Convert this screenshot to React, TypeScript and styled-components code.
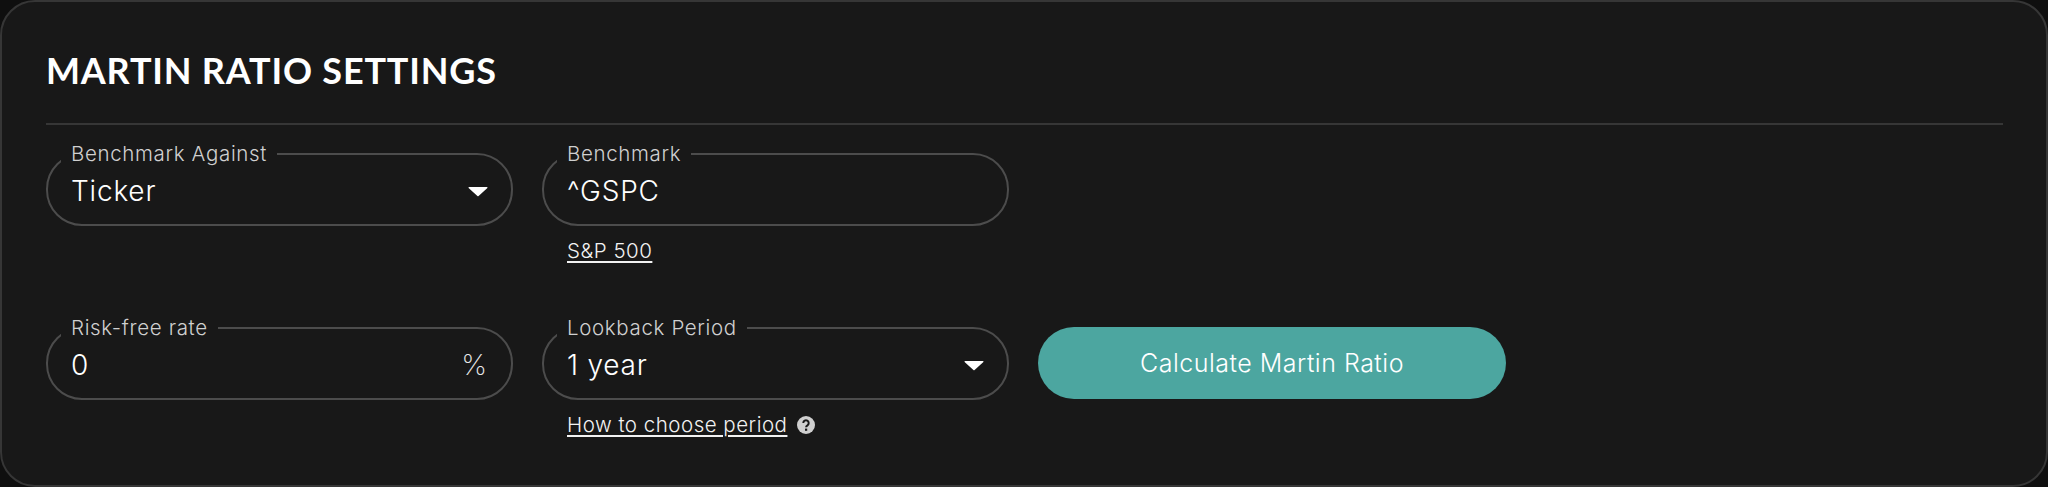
import React from "react";
import styled, { createGlobalStyle } from "styled-components";

const Global = createGlobalStyle`
  html, body { margin: 0; padding: 0; background: #0f0f0f; }
  body { font-family: "Inter", "Noto Sans", sans-serif; }
`;

const Card = styled.section`
  box-sizing: border-box;
  width: 2048px;
  height: 487px;
  padding: 0 43px 0 44px;
  background: #181818;
  border: 2px solid #363636;
  border-radius: 35px;
  overflow: hidden;
`;

const Title = styled.h2`
  margin: 0;
  padding: 47px 0 32px;
  height: 42px;
  box-sizing: content-box;
  font-family: "Lato", "Noto Sans", sans-serif;
  font-size: 36px;
  line-height: 42px;
  font-weight: 700;
  letter-spacing: 0.8px;
  color: #fff;
  border-bottom: 2px solid #363636;
`;

const Grid = styled.div`
  display: grid;
  grid-template-columns: repeat(3, 467px);
  column-gap: 29px;
  row-gap: 53px;
  padding-top: 17px;
  align-items: start;
`;

const Column = styled.div`
  display: flex;
  flex-direction: column;
`;

const Field = styled.fieldset`
  box-sizing: border-box;
  height: 84px;
  margin: 0;
  padding: 0 24px 0 23px;
  border: 2px solid #4c4c4c;
  border-radius: 36px;
  min-width: 0;
`;

const Legend = styled.legend`
  margin-left: -10px;
  padding: 0 10px;
  height: 24px;
  font-size: 20.5px;
  line-height: 24px;
  font-weight: 300;
  letter-spacing: 0.65px;
  color: #d0d0d0;
`;

const FieldBody = styled.div`
  display: flex;
  align-items: center;
  justify-content: space-between;
  height: 50px;
`;

const Value = styled.span`
  font-size: 28px;
  line-height: 36px;
  font-weight: 300;
  letter-spacing: 0.8px;
  color: #fff;
`;

const Suffix = styled(Value)`
  font-size: 29px;
  font-weight: 200;
  letter-spacing: 0;
  color: #e8e8e8;
`;

const Arrow = styled.svg`
  width: 20px;
  height: 11px;
  margin-right: -1px;
`;

const HelperRow = styled.div`
  display: flex;
  align-items: center;
  gap: 10px;
  height: 24px;
  margin-top: 13px;
  padding-left: 25px;
`;

const HelperLink = styled.a`
  font-size: 20.5px;
  line-height: 24px;
  font-weight: 300;
  letter-spacing: 0.5px;
  color: #f2f2f2;
  text-decoration: underline;
  text-underline-offset: 3px;
  text-decoration-thickness: 1.5px;
`;

const HelpIcon = styled.svg`
  width: 18px;
  height: 18px;
`;

const CalcButton = styled.button`
  box-sizing: border-box;
  width: 468px;
  height: 72px;
  margin-top: 11px;
  border: 0;
  border-radius: 36px;
  background: #4ca6a0;
  color: #fff;
  font-family: inherit;
  font-size: 25px;
  font-weight: 300;
  letter-spacing: 0.5px;
`;

const Caret = () => (
  <Arrow viewBox="0 0 20 11" aria-hidden="true">
    <path d="M1 1h18a.6.6 0 0 1 .4 1L10.6 10a.9.9 0 0 1-1.2 0L.6 2A.6.6 0 0 1 1 1z" fill="#fff" />
  </Arrow>
);

export default function App() {
  return (
    <>
      <Global />
      <Card>
        <Title>MARTIN RATIO SETTINGS</Title>
        <Grid>
          <Column>
            <Field>
              <Legend>Benchmark Against</Legend>
              <FieldBody>
                <Value>Ticker</Value>
                <Caret />
              </FieldBody>
            </Field>
          </Column>
          <Column>
            <Field>
              <Legend>Benchmark</Legend>
              <FieldBody>
                <Value>^GSPC</Value>
              </FieldBody>
            </Field>
            <HelperRow>
              <HelperLink>S&amp;P 500</HelperLink>
            </HelperRow>
          </Column>
          <div />
          <Column>
            <Field>
              <Legend>Risk-free rate</Legend>
              <FieldBody>
                <Value>0</Value>
                <Suffix>%</Suffix>
              </FieldBody>
            </Field>
          </Column>
          <Column>
            <Field>
              <Legend>Lookback Period</Legend>
              <FieldBody>
                <Value>1 year</Value>
                <Caret />
              </FieldBody>
            </Field>
            <HelperRow>
              <HelperLink>How to choose period</HelperLink>
              <HelpIcon viewBox="0 0 18 18" aria-hidden="true">
                <circle cx="9" cy="9" r="9" fill="#cfcfcf" />
                <path d="M6.3 7a2.7 2.7 0 1 1 4.2 2.3c-.9.6-1.4 1-1.4 2" fill="none" stroke="#181818" strokeWidth="2" />
                <rect x="8" y="12.6" width="2.2" height="2.2" fill="#181818" />
              </HelpIcon>
            </HelperRow>
          </Column>
          <CalcButton>Calculate Martin Ratio</CalcButton>
        </Grid>
      </Card>
    </>
  );
}
